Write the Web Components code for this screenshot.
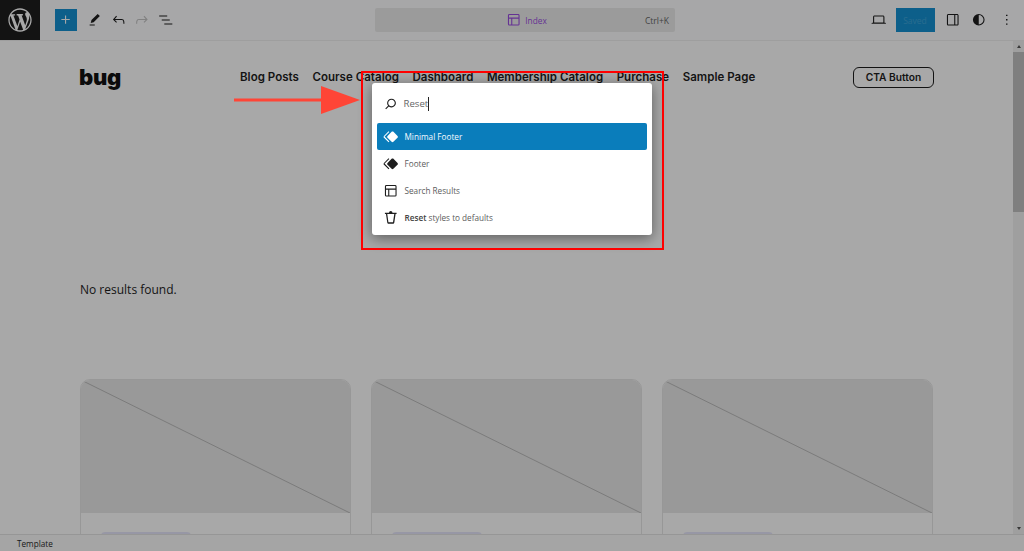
<!DOCTYPE html>
<html lang="en">
<head>
<meta charset="utf-8">
<title>Index</title>
<style>
html, body { margin: 0; height: 100%; overflow: hidden; background: #fff; }
body { font-family: "Open Sans", "Noto Sans", sans-serif; }
</style>
</head>
<body>
<wp-editor>
  <wp-topbar slot="top"></wp-topbar>
  <site-canvas slot="canvas">
    <site-header>
      <site-link>Blog Posts</site-link>
      <site-link>Course Catalog</site-link>
      <site-link>Dashboard</site-link>
      <site-link>Membership Catalog</site-link>
      <site-link>Purchase</site-link>
      <site-link>Sample Page</site-link>
    </site-header>
    <p slot="empty">No results found.</p>
    <query-card slot="cards"></query-card>
    <query-card slot="cards"></query-card>
    <query-card slot="cards"></query-card>
  </site-canvas>
  <wp-scrollbar slot="scroll"></wp-scrollbar>
  <wp-status slot="status">Template</wp-status>
  <command-palette slot="dialog" value="Reset">
    <command-item icon="part" active>Minimal Footer</command-item>
    <command-item icon="part">Footer</command-item>
    <command-item icon="layout">Search Results</command-item>
    <command-item icon="trash"><b>Reset</b> styles to defaults</command-item>
  </command-palette>
  <red-callout slot="note"></red-callout>
</wp-editor>

<script>
const ICONS = {
  wp: ['-2 -2 24 24', 'M20 10c0-5.51-4.49-10-10-10C4.48 0 0 4.49 0 10c0 5.52 4.48 10 10 10 5.51 0 10-4.48 10-10zM7.78 15.37L4.37 6.22c.55-.02 1.17-.08 1.17-.08.5-.06.44-1.13-.06-1.11 0 0-1.45.11-2.37.11-.18 0-.37 0-.58-.01C4.12 2.69 6.87 1.11 10 1.11c2.33 0 4.45.87 6.05 2.34-.68-.11-1.65.39-1.65 1.58 0 .74.45 1.36.9 2.1.35.61.55 1.36.55 2.46 0 1.49-1.4 5-1.4 5l-3.03-8.37c.54-.02.82-.17.82-.17.5-.05.44-1.25-.06-1.22 0 0-1.44.12-2.38.12-.87 0-2.33-.12-2.33-.12-.5-.03-.56 1.2-.06 1.22l.92.08 1.26 3.41zM17.41 10c.24-.64.74-1.87.43-4.25.7 1.29 1.05 2.71 1.05 4.25 0 3.29-1.73 6.24-4.4 7.78.97-2.59 1.94-5.2 2.92-7.78zM6.1 18.09C3.12 16.65 1.11 13.53 1.11 10c0-1.3.23-2.48.72-3.59C3.25 10.3 4.67 14.2 6.1 18.09zm4.03-6.63l2.58 6.98c-.86.29-1.76.45-2.71.45-.79 0-1.57-.11-2.29-.33.81-2.38 1.62-4.74 2.42-7.1z'],
  plus: ['0 0 24 24', 'M11 12.5V17.5H12.5V12.5H17.5V11H12.5V6H11V11H6V12.5H11Z'],
  edit: ['0 0 24 24', 'm19 7-3-3-8.5 8.5-1 4 4-1L19 7Zm-7 11.5H5V20h7v-1.5Z'],
  undo: ['0 0 24 24', 'M18.3 11.7c-.6-.6-1.4-.9-2.3-.9H6.7l2.9-3.3-1.1-1-4.5 5L8.5 16l1-1-2.7-2.7H16c.5 0 .9.2 1.3.5 1 1 1 3.4 1 4.5v.3h1.5v-.2c0-1.5 0-4.3-1.5-5.7z'],
  redo: ['0 0 24 24', 'M15.6 6.5l-1.1 1 2.9 3.3H8c-.9 0-1.7.3-2.3.9-1.4 1.5-1.4 4.2-1.4 5.6v.2h1.5v-.3c0-1.1 0-3.5 1-4.5.3-.3.7-.5 1.3-.5h9.2L14.5 15l1.1 1.1 4.6-4.6-4.6-5z'],
  list: ['0 0 24 24', 'M3 6h11v1.5H3V6Zm3.5 5.5h11V13h-11v-1.5ZM21 17H10v1.5h11V17Z'],
  search: ['0 0 24 24', 'M13 5c-3.3 0-6 2.7-6 6 0 1.4.5 2.7 1.3 3.7l-3.8 3.8 1.1 1.1 3.8-3.8c1 .8 2.3 1.3 3.7 1.3 3.3 0 6-2.7 6-6S16.3 5 13 5zm0 10.5c-2.5 0-4.5-2-4.5-4.5s2-4.5 4.5-4.5 4.5 2 4.5 4.5-2 4.5-4.5 4.5z'],
  layout: ['0 0 24 24', 'M18 5.5H6a.5.5 0 00-.5.5v3h13V6a.5.5 0 00-.5-.5zm.5 5H10v8h8a.5.5 0 00.5-.5v-7.5zm-10 0h-3V18a.5.5 0 00.5.5h2.5v-8zM6 4h12a2 2 0 012 2v12a2 2 0 01-2 2H6a2 2 0 01-2-2V6a2 2 0 012-2z'],
  trash: ['0 0 24 24', 'M20 5h-5.7c0-1.3-1-2.3-2.3-2.3S9.7 3.7 9.7 5H4v2h1.5v.3l1.7 11.1c.1 1 1 1.7 2 1.7h5.7c1 0 1.8-.7 2-1.7l1.7-11.1V7H20V5zm-3.2 2l-1.7 11.1c0 .1-.1.2-.3.2H9.1c-.1 0-.3-.1-.3-.2L7.2 7h9.6z'],
  part: ['0 0 24 24', 'M21.3 10.8l-5.6-5.6c-.7-.7-1.8-.7-2.5 0l-5.6 5.6c-.7.7-.7 1.8 0 2.5l5.6 5.6c.3.3.8.5 1.2.5s.9-.2 1.2-.5l5.6-5.6c.8-.7.8-1.9.1-2.5zm-17.6 1L10 5.5l-1-1-6.3 6.3c-.7.7-.7 1.8 0 2.5L9 19.5l1.1-1.1-6.3-6.3c-.2 0-.2-.2-.1-.3z'],
  laptop: ['0 0 24 24', 'M20.5 16h-.7V8c0-1.1-.9-2-2-2H6.2c-1.1 0-2 .9-2 2v8h-.7c-.8 0-1.5.7-1.5 1.5h20c0-.8-.7-1.5-1.5-1.5zM5.7 8c0-.3.2-.5.5-.5h11.6c.3 0 .5.2.5.5v7.6H5.7V8z'],
  panel: ['0 0 24 24', 'M18 4H6c-1.1 0-2 .9-2 2v12c0 1.1.9 2 2 2h12c1.1 0 2-.9 2-2V6c0-1.1-.9-2-2-2zM5.5 18V6c0-.3.2-.5.5-.5h8v13H6c-.3 0-.5-.2-.5-.5zm13 0c0 .3-.2.5-.5.5h-2.5v-13H18c.3 0 .5.2.5.5v12z'],
  styles: ['0 0 24 24', 'M12 4a8 8 0 1 0 0 16 8 8 0 0 0 0-16Zm0 1.5a6.5 6.5 0 0 1 0 13v-13Z'],
  more: ['0 0 24 24', 'M13 19h-2v-2h2v2zm0-6h-2v-2h2v2zm0-6h-2V5h2v2z']
}

class WpIcon extends HTMLElement {
  constructor() {
    super()
    this.attachShadow({mode: 'open'})
    const [box, d] = ICONS[this.getAttribute('name')]
    this.shadowRoot.innerHTML = `
<style>
:host { display: block; width: var(--icon, 17.5px); height: var(--icon, 17.5px); flex: none; color: inherit; }
svg { display: block; width: 100%; height: 100%; fill: currentColor; }
</style>
<svg viewBox="${box}"><path fill-rule="evenodd" d="${d}"/></svg>`
  }
}

class WpEditor extends HTMLElement {
  constructor() {
    super()
    this.attachShadow({mode: 'open'})
    this.shadowRoot.innerHTML = `
<style>
:host { display: flex; flex-direction: column; position: relative; height: 100vh; overflow: hidden; }
.main { flex: 1; min-height: 0; display: flex; }
.scrim { position: absolute; inset: 0; background: rgba(0,0,0,.34); }
</style>
<slot name="top"></slot>
<div class="main"><slot name="canvas"></slot><slot name="scroll"></slot></div>
<slot name="status"></slot>
<div class="scrim"></div>
<slot name="dialog"></slot>
<slot name="note"></slot>`
  }
}

class WpTopbar extends HTMLElement {
  constructor() {
    super()
    this.attachShadow({mode: 'open'})
    this.shadowRoot.innerHTML = `
<style>
:host { display: flex; align-items: center; height: 40px; flex: none; background: #fdfdff; border-bottom: 1px solid #f0f0f0; color: #1e1e1e; font-family: "Open Sans", sans-serif; }
.logo { width: 40px; height: 40px; background: #1e1e1e; color: #fff; display: grid; place-items: center; --icon: 28px; }
.add { width: 22px; height: 22px; margin-left: 15px; background: #1590d2; color: #fff; display: grid; place-items: center; }
.tools { display: flex; gap: 6px; margin-left: 9px; align-items: center; }
.off { color: #c4c4c4; }
.search { width: 300px; height: 24px; margin-left: 201px; box-sizing: border-box; padding: 0 6px 0 8px; background: #ececec; border-radius: 2px; display: grid; grid-template-columns: 1fr auto 1fr; align-items: center; font-size: 8.5px; color: #666; }
.doc { display: flex; align-items: center; gap: 2.5px; color: #9a4de0; grid-column: 2; font-size: 8.3px; }
.key { justify-self: end; }
.right { margin-left: auto; display: flex; align-items: center; padding-right: 9px; }
.saved { width: 39px; height: 24px; margin: 0 9px 0 8px; background: #1590d2; color: #3fa6da; display: grid; place-items: center; font-size: 8.5px; }
.right wp-icon + wp-icon { margin-left: 8.5px; }
.right wp-icon[name=more] { margin-left: 10.5px; }
</style>
<div class="logo"><wp-icon name="wp"></wp-icon></div>
<div class="add"><wp-icon name="plus"></wp-icon></div>
<div class="tools">
  <wp-icon name="edit"></wp-icon>
  <wp-icon name="undo"></wp-icon>
  <wp-icon class="off" name="redo"></wp-icon>
  <wp-icon name="list"></wp-icon>
</div>
<div class="search">
  <div class="doc"><wp-icon name="layout"></wp-icon><span>Index</span></div>
  <span class="key">Ctrl+K</span>
</div>
<div class="right">
  <wp-icon name="laptop"></wp-icon>
  <div class="saved">Saved</div>
  <wp-icon name="panel"></wp-icon>
  <wp-icon name="styles"></wp-icon>
  <wp-icon name="more"></wp-icon>
</div>`
  }
}

class SiteCanvas extends HTMLElement {
  constructor() {
    super()
    this.attachShadow({mode: 'open'})
    this.shadowRoot.innerHTML = `
<style>
:host { display: block; flex: 1; min-width: 0; overflow: hidden; background: #fff; padding: 25px 80px 0; box-sizing: border-box; }
::slotted(p) { margin: 193px 0 0; height: 16px; font: 12px/17px "Open Sans", sans-serif; color: #1e1e1e; }
.cards { display: grid; grid-template-columns: repeat(3, 271px); gap: 20px; margin-top: 82px; }
</style>
<slot></slot>
<slot name="empty"></slot>
<div class="cards"><slot name="cards"></slot></div>`
  }
}

class SiteHeader extends HTMLElement {
  constructor() {
    super()
    this.attachShadow({mode: 'open'})
    this.shadowRoot.innerHTML = `
<style>
:host { display: flex; align-items: center; height: 22px; width: 854px; }
.brand { width: 41px; margin-left: -1px; font: 900 22px/22px Inter, sans-serif; color: #111; letter-spacing: -.3px; }
nav { display: flex; gap: 13.5px; margin-left: 120px; }
.cta { margin-left: auto; box-sizing: border-box; width: 81px; height: 21px; border: 1.5px solid #1e1e1e; border-radius: 6px; display: grid; place-items: center; font: 600 10.2px/1 Inter, sans-serif; color: #1e1e1e; }
</style>
<div class="brand">bug</div>
<nav><slot></slot></nav>
<div class="cta">CTA Button</div>`
  }
}

class SiteLink extends HTMLElement {
  constructor() {
    super()
    this.attachShadow({mode: 'open'})
    this.shadowRoot.innerHTML = `
<style>
:host { display: block; font: 600 11.5px/22px Inter, sans-serif; letter-spacing: .03px; color: #1e1e1e; white-space: nowrap; }
</style>
<slot></slot>`
  }
}

class QueryCard extends HTMLElement {
  constructor() {
    super()
    this.attachShadow({mode: 'open'})
    this.shadowRoot.innerHTML = `
<style>
:host { display: block; height: 200px; box-sizing: border-box; border: 1px solid #e6e6e6; border-radius: 10px 10px 0 0; overflow: hidden; background: #fff; }
svg { display: block; width: 100%; height: 133px; background: #e8e8e8; }
line { stroke: #bbb; stroke-width: 1; vector-effect: non-scaling-stroke; }
.pill { width: 90px; height: 20px; margin: 19px 0 0 20px; background: #e6e6fa; border-radius: 4px; }
</style>
<svg viewBox="0 0 100 100" preserveAspectRatio="none"><line x1="0" y1="0" x2="100" y2="100"/></svg>
<div class="pill"></div>`
  }
}

class WpScrollbar extends HTMLElement {
  constructor() {
    super()
    this.attachShadow({mode: 'open'})
    this.shadowRoot.innerHTML = `
<style>
:host { display: flex; flex-direction: column; width: 11px; flex: none; background: #f1f1f1; }
.btn { height: 11px; display: grid; place-items: center; flex: none; }
.up { width: 0; height: 0; border: 2.5px solid transparent; border-top: 0; border-bottom: 3px solid #555; }
.down { width: 0; height: 0; border: 2.5px solid transparent; border-bottom: 0; border-top: 3px solid #555; }
.thumb { height: 160px; background: #c1c1c1; flex: none; }
.gap { flex: 1; }
</style>
<div class="btn"><div class="up"></div></div>
<div class="thumb"></div>
<div class="gap"></div>
<div class="btn"><div class="down"></div></div>`
  }
}

class WpStatus extends HTMLElement {
  constructor() {
    super()
    this.attachShadow({mode: 'open'})
    this.shadowRoot.innerHTML = `
<style>
:host { display: flex; align-items: center; height: 17px; flex: none; box-sizing: border-box; border-top: 1px solid #e4e4e4; background: #fafafa; padding-left: 17px; font: 8.2px "Open Sans", sans-serif; color: #2a2a2a; }
</style>
<slot></slot>`
  }
}

class CommandPalette extends HTMLElement {
  constructor() {
    super()
    this.attachShadow({mode: 'open'})
    this.shadowRoot.innerHTML = `
<style>
:host { display: block; position: absolute; left: 372px; top: 83px; width: 280px; height: 152px; box-sizing: border-box; background: #fff; border-radius: 3px; box-shadow: 0 3px 14px rgba(0,0,0,.45); font-family: "Open Sans", sans-serif; }
.input { display: flex; align-items: center; height: 38px; padding: 2px 0 0 10px; gap: 4px; color: #1e1e1e; }
.value { font-size: 9.6px; color: #666; border-right: 1px solid #222; line-height: 14px; }
.list { padding: 0 5px; }
</style>
<div class="input"><wp-icon name="search"></wp-icon><span class="value">${this.getAttribute('value')}</span></div>
<div class="list"><slot></slot></div>`
  }
}

class CommandItem extends HTMLElement {
  constructor() {
    super()
    this.attachShadow({mode: 'open'})
    this.shadowRoot.innerHTML = `
<style>
:host { display: flex; align-items: center; gap: 5px; height: 27px; padding-left: 5px; border-radius: 2px; font-size: 8.2px; color: #5c5c5c; }
:host([active]) { background: #0a7dbb; color: #f4faff; }
wp-icon { color: #1e1e1e; }
:host([active]) wp-icon { color: #fff; }
::slotted(b) { font-weight: 600; color: #444; }
</style>
<wp-icon name="${this.getAttribute('icon')}"></wp-icon>
<span><slot></slot></span>`
  }
}

class RedCallout extends HTMLElement {
  constructor() {
    super()
    this.attachShadow({mode: 'open'})
    this.shadowRoot.innerHTML = `
<style>
:host { display: block; position: absolute; left: 0; top: 0; width: 0; height: 0; }
.box { position: absolute; left: 361px; top: 71px; width: 303px; height: 179px; box-sizing: border-box; border: 2.5px solid #f00; }
svg { position: absolute; left: 234px; top: 84px; width: 128px; height: 32px; }
</style>
<div class="box"></div>
<svg viewBox="0 0 128 32"><rect x="0" y="14.5" width="88" height="3" fill="#ff4536"/><polygon points="87,2 126,16 87,30" fill="#ff4536"/></svg>`
  }
}

customElements.define('wp-icon', WpIcon)
customElements.define('wp-editor', WpEditor)
customElements.define('wp-topbar', WpTopbar)
customElements.define('site-canvas', SiteCanvas)
customElements.define('site-header', SiteHeader)
customElements.define('site-link', SiteLink)
customElements.define('query-card', QueryCard)
customElements.define('wp-scrollbar', WpScrollbar)
customElements.define('wp-status', WpStatus)
customElements.define('command-palette', CommandPalette)
customElements.define('command-item', CommandItem)
customElements.define('red-callout', RedCallout)
</script>
</body>
</html>
